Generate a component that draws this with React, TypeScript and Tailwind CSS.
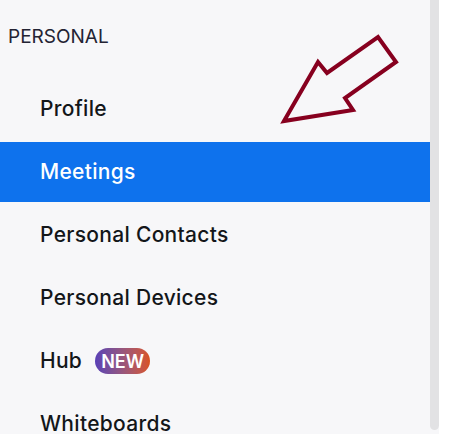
import React from "react"

type Item = { label: string; active?: boolean; badge?: string }

const items: Item[] = [
  { label: "Profile" },
  { label: "Meetings", active: true },
  { label: "Personal Contacts" },
  { label: "Personal Devices" },
  { label: "Hub", badge: "NEW" },
  { label: "Whiteboards" },
]

function Arrow() {
  return (
    <svg
      className="absolute left-0 top-0 pointer-events-none"
      width="458"
      height="434"
      viewBox="0 0 458 434"
    >
      <path
        d="M284 121 L318 62 L327 73 L378 37 L396 62 L345 98 L353 110 Z"
        fill="none"
        stroke="#87001f"
        strokeWidth="4"
        strokeLinejoin="miter"
      />
    </svg>
  )
}

export default function App() {
  return (
    <div
      className="relative flex h-[434px] w-[458px] overflow-hidden bg-white"
      style={{ fontFamily: "Inter, 'Noto Sans', sans-serif" }}
    >
      <nav className="flex w-[430px] shrink-0 flex-col bg-[#f7f7f9]">
        <div className="flex h-[75px] shrink-0 items-center pl-2 text-[19px] text-[#232333]">PERSONAL</div>
        <ul className="mt-1 flex shrink-0 flex-col gap-[3px]">
          {items.map((it) => (
            <li
              key={it.label}
              className={`flex h-[60px] shrink-0 items-center gap-[13px] pl-10 text-[21px] font-medium tracking-[0.3px] ${
                it.active ? "bg-[#0e72ed] text-white" : "text-[#131619]"
              }`}
            >
              <span>{it.label}</span>
              {it.badge && (
                <span className="flex h-[26px] items-center rounded-full bg-gradient-to-r from-[#5a3fb6] to-[#d9531b] px-[6px] text-[18px] font-semibold tracking-normal text-white">
                  {it.badge}
                </span>
              )}
            </li>
          ))}
        </ul>
      </nav>
      <div className="w-[9px] shrink-0 bg-[#f7f7f9]">
        <div className="h-[430px] w-[9px] rounded-b-[5px] bg-[#e2e2e4]" />
      </div>
      <div className="flex-1 bg-white" />
      <Arrow />
    </div>
  )
}
